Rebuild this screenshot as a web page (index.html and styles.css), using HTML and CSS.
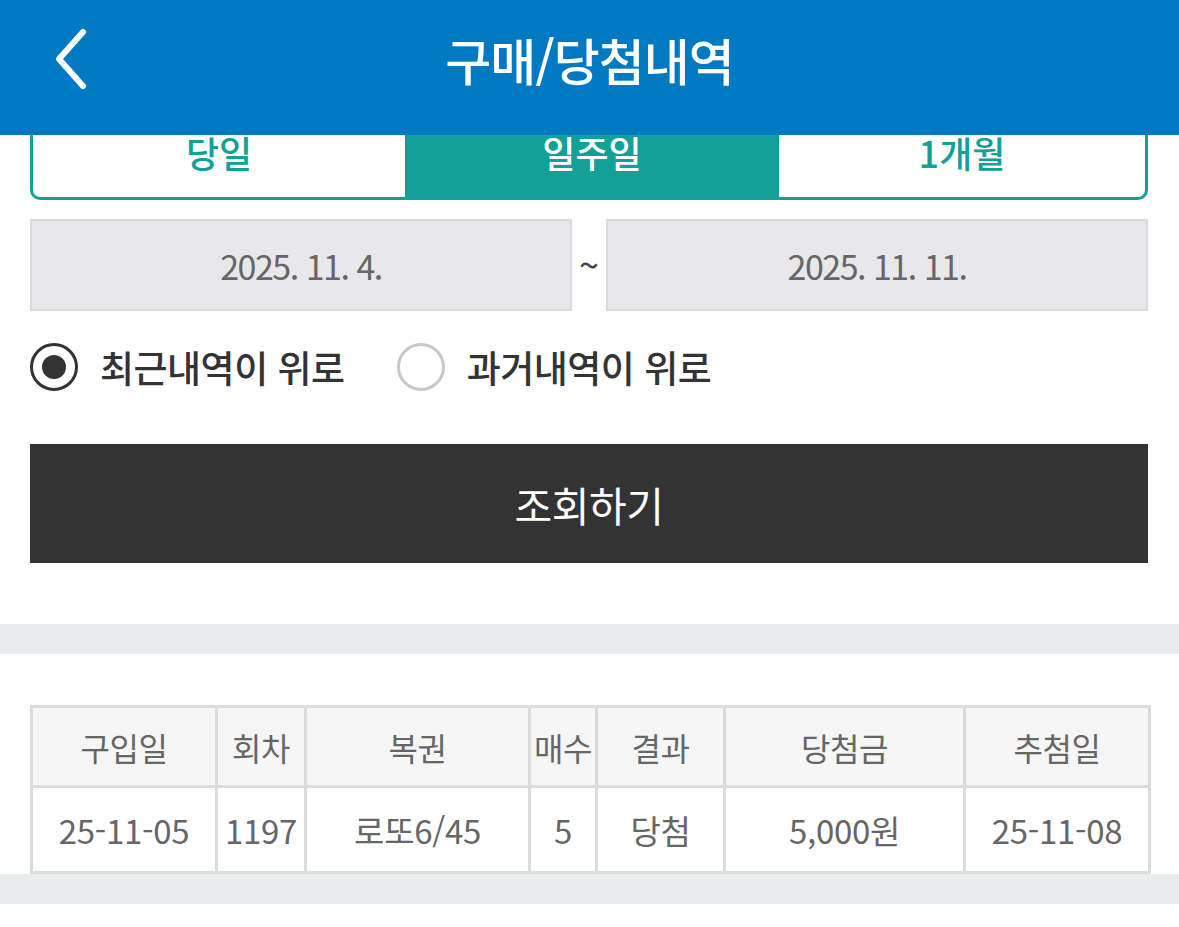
FILE: index.html
```html
<!DOCTYPE html>
<html lang="ko">
<head>
<meta charset="utf-8">
<title>구매/당첨내역</title>
<link rel="stylesheet" href="styles.css">
</head>
<body>
<header class="appbar">
  <button class="back" aria-label="뒤로">
    <svg width="40" height="64" viewBox="0 0 40 64"><path d="M33 5 L9 32 L33 59" fill="none" stroke="#fff" stroke-width="6" stroke-linecap="round" stroke-linejoin="round"/></svg>
  </button>
  <h1 class="title">구매/당첨내역</h1>
</header>

<main class="page">
  <section class="search">
    <div class="tabs">
      <div class="tab">당일</div>
      <div class="tab active">일주일</div>
      <div class="tab">1개월</div>
    </div>

    <div class="dates">
      <div class="date">2025. 11. 4.</div>
      <span class="tilde">~</span>
      <div class="date">2025. 11. 11.</div>
    </div>

    <div class="radios">
      <label class="radio checked"><span class="dot"></span>최근내역이 위로</label>
      <label class="radio"><span class="dot"></span>과거내역이 위로</label>
    </div>

    <button class="submit">조회하기</button>
  </section>

  <div class="band"></div>

  <section class="result">
    <table class="list">
      <colgroup>
        <col class="c1"><col class="c2"><col class="c3"><col class="c4"><col class="c5"><col class="c6"><col class="c7">
      </colgroup>
      <thead>
        <tr><th>구입일</th><th>회차</th><th>복권</th><th>매수</th><th>결과</th><th>당첨금</th><th>추첨일</th></tr>
      </thead>
      <tbody>
        <tr><td>25-11-05</td><td>1197</td><td>로또6/45</td><td>5</td><td>당첨</td><td>5,000원</td><td>25-11-08</td></tr>
      </tbody>
    </table>
  </section>

  <div class="band band-bottom"></div>
</main>
</body>
</html>
```

FILE: styles.css
```css
* { box-sizing: border-box; }
html, body { margin: 0; padding: 0; background: #fff; }
body {
  font-family: "Noto Sans CJK KR", "Noto Sans", sans-serif;
  color: #333;
}

.appbar {
  position: fixed;
  top: 0; left: 0; right: 0;
  height: 135px;
  background: #0079C3;
  display: flex;
  align-items: center;
  justify-content: center;
  z-index: 10;
}
.back {
  position: absolute;
  left: 46px;
  top: 26px;
  width: 48px;
  height: 66px;
  padding: 0;
  border: 0;
  background: transparent;
  display: flex;
  align-items: center;
  justify-content: center;
}
.title {
  margin: 0;
  margin-top: -18px;
  color: #fff;
  font-size: 50px;
  font-weight: 500;
  letter-spacing: -1px;
}

.page { padding-top: 106px; }

.search { padding: 0 31px 0 30px; }

.tabs {
  display: grid;
  grid-template-columns: 372px 374px 1fr;
  height: 94px;
  border: 3px solid #13A096;
  border-radius: 10px;
  overflow: hidden;
}
.tab {
  display: flex;
  align-items: center;
  justify-content: center;
  color: #13A096;
  font-size: 36px;
  font-weight: 500;
  padding-bottom: 2px;
}
.tab.active { background: #13A096; color: #fff; }

.dates {
  display: flex;
  align-items: center;
  margin-top: 19px;
  height: 92px;
}
.date {
  flex: 1;
  height: 100%;
  display: flex;
  align-items: center;
  justify-content: center;
  background: #E8E8EA;
  border: 2px solid #DADADA;
  color: #666;
  font-size: 34px;
  letter-spacing: -1.5px;
}
.tilde {
  width: 34px;
  text-align: center;
  color: #444;
  font-size: 36px;
  line-height: 1;
  padding-bottom: 4px;
}

.radios {
  display: flex;
  align-items: center;
  gap: 52px;
  margin-top: 32px;
  height: 48px;
}
.radio {
  display: flex;
  align-items: center;
  gap: 22px;
  font-size: 37px;
  font-weight: 500;
  color: #333;
  letter-spacing: -0.5px;
}
.dot {
  width: 48px;
  height: 48px;
  border-radius: 50%;
  border: 3px solid #C8C8C8;
  display: flex;
  align-items: center;
  justify-content: center;
}
.radio.checked .dot { border-color: #333; }
.radio.checked .dot::after {
  content: "";
  width: 24px;
  height: 24px;
  border-radius: 50%;
  background: #333;
}

.submit {
  display: block;
  width: 100%;
  height: 119px;
  margin-top: 53px;
  border: 0;
  background: #333;
  color: #fff;
  font-family: inherit;
  font-size: 41px;
  font-weight: 400;
  letter-spacing: -0.5px;
}

.band {
  height: 30px;
  background: #E8ECED;
  margin-top: 61px;
}
.band-bottom { margin-top: 0; }

.result { padding: 51px 31px 0 30px; }

.list {
  width: 100%;
  table-layout: fixed;
  border-collapse: collapse;
  color: #666;
  font-size: 32px;
  border: 3px solid #DCDCDC;
}
.list th, .list td {
  border: 3px solid #DCDCDC;
  text-align: center;
  padding: 0;
  white-space: nowrap;
}
.list th { height: 80px; background: #F6F6F6; font-weight: 400; letter-spacing: -0.5px; }
.list td { height: 86px; font-weight: 400; font-size: 33px; letter-spacing: -0.3px; }
.c1 { width: 185px; }
.c2 { width: 89px; }
.c3 { width: 224px; }
.c4 { width: 67px; }
.c5 { width: 128px; }
.c6 { width: 240px; }
.c7 { width: 185px; }
```
